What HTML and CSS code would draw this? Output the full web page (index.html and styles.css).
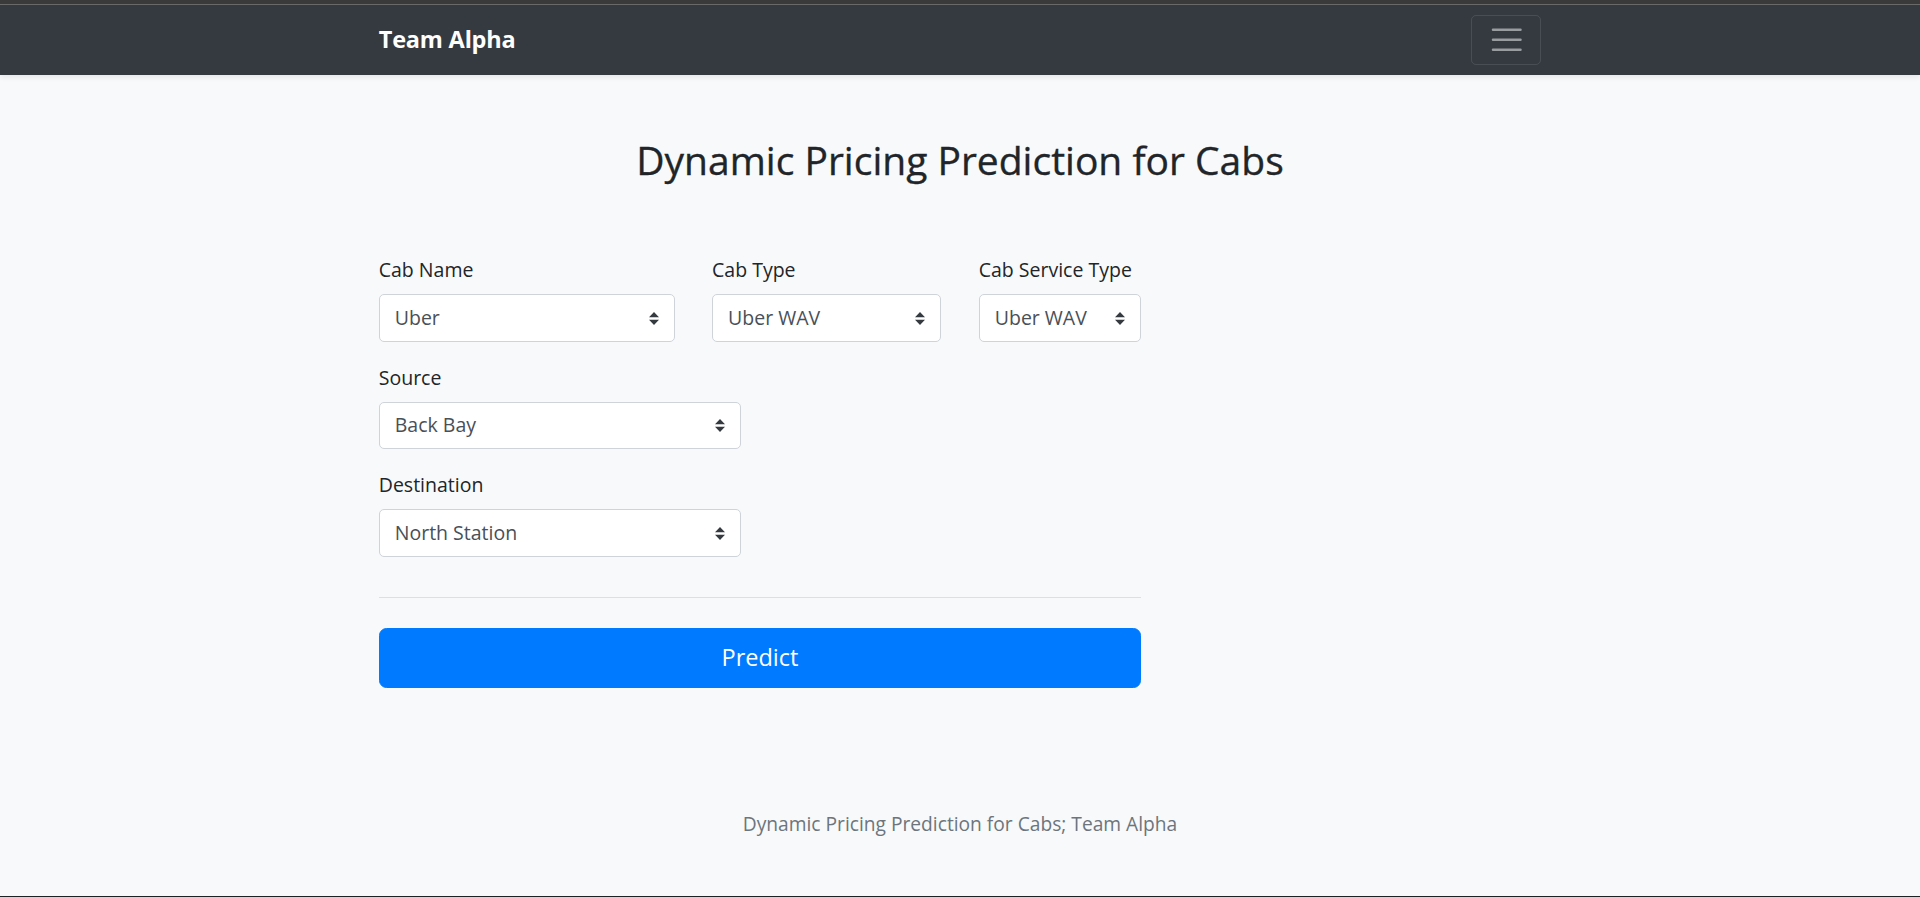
FILE: index.html
```html
<!DOCTYPE html>
<html lang="en">
<head>
<meta charset="utf-8">
<title>Dynamic Pricing Prediction for Cabs</title>
<link rel="stylesheet" href="styles.css">
</head>
<body>
<div class="page">
  <div class="chrome-line"></div>
  <nav class="navbar">
    <div class="nav-inner">
      <a class="brand" href="#">Team Alpha</a>
      <button class="toggler" type="button" aria-label="Toggle navigation">
        <svg class="toggler-icon" viewBox="0 0 30 30" width="37.5" height="37.5">
          <path d="M4 7h22M4 15h22M4 23h22" stroke="rgba(255,255,255,0.5)" stroke-width="2" stroke-linecap="round" stroke-miterlimit="10" fill="none"/>
        </svg>
      </button>
    </div>
  </nav>

  <main class="main">
    <h2 class="title">Dynamic Pricing Prediction for Cabs</h2>

    <form class="form">
      <div class="row row-3">
        <div class="form-group">
          <label class="label">Cab Name</label>
          <select class="select"><option>Uber</option><option>Lyft</option></select>
        </div>
        <div class="form-group">
          <label class="label">Cab Type</label>
          <select class="select"><option>Uber WAV</option></select>
        </div>
        <div class="form-group">
          <label class="label">Cab Service Type</label>
          <select class="select"><option>Uber WAV</option></select>
        </div>
      </div>
      <div class="row row-half">
        <div class="form-group">
          <label class="label">Source</label>
          <select class="select"><option>Back Bay</option></select>
        </div>
      </div>
      <div class="row row-half">
        <div class="form-group">
          <label class="label">Destination</label>
          <select class="select"><option>North Station</option></select>
        </div>
      </div>
      <hr class="divider">
      <button class="btn-predict" type="button">Predict</button>
    </form>
  </main>

  <footer class="footer">Dynamic Pricing Prediction for Cabs; Team Alpha</footer>
</div>
</body>
</html>
```
FILE: styles.css
```css
* { box-sizing: border-box; }

html, body {
  margin: 0;
  padding: 0;
}

body {
  background: #f8f9fa;
  color: #212529;
  font-family: "Open Sans", "Noto Sans", sans-serif;
  font-size: 19.5px;
  line-height: 30px;
}

.page {
  min-height: 897px;
  display: flex;
  flex-direction: column;
  border-bottom: 1px solid #1d2124;
}

.chrome-line {
  height: 5px;
  background: #3a3a3a;
  border-bottom: 1px solid #6a6a6a;
}

.navbar {
  height: 70px;
  background: #343a40;
  box-shadow: 0 2.5px 5px rgba(0, 0, 0, 0.075);
}

.nav-inner {
  width: 1162.5px;
  height: 100%;
  margin: 0 auto;
  display: flex;
  align-items: center;
  justify-content: space-between;
}

.brand {
  color: #fff;
  font-weight: 700;
  font-size: 23.5px;
  line-height: 37.5px;
  text-decoration: none;
  letter-spacing: -0.2px;
}

.toggler {
  width: 70px;
  height: 50px;
  padding: 5px 15px;
  background: transparent;
  border: 1px solid rgba(255, 255, 255, 0.1);
  border-radius: 5px;
  display: flex;
  align-items: center;
  justify-content: center;
}

.toggler-icon {
  display: block;
}

.main {
  width: 1162.5px;
  margin: 0 auto;
}

.title {
  margin: 61px 0 10px;
  font-size: 39px;
  line-height: 48px;
  font-weight: 500;
  text-align: center;
  color: #212529;
  -webkit-text-stroke: 0.35px #212529;
}

.form {
  width: 762.5px;
  padding-top: 60px;
}

.row {
  display: grid;
  column-gap: 37.5px;
}

.row-3 {
  grid-template-columns: 295.8px 229.2px 162.5px;
}

.row-half {
  grid-template-columns: 362.5px;
}

.form-group {
  margin-bottom: 20px;
}

.label {
  display: block;
  margin-bottom: 10px;
  color: #212529;
  padding-top: 1px;
  line-height: 29px;
}

.select {
  display: block;
  width: 100%;
  height: 47.5px;
  padding: 7.5px 35px 7.5px 15px;
  font-family: inherit;
  font-size: 19.5px;
  line-height: 30px;
  color: #495057;
  background-color: #fff;
  background-image: url("data:image/svg+xml,%3csvg xmlns='http://www.w3.org/2000/svg' width='4' height='5' viewBox='0 0 4 5'%3e%3cpath fill='%23343a40' d='M2 0L0 2h4zm0 5L0 3h4z'/%3e%3c/svg%3e");
  background-repeat: no-repeat;
  background-position: right 15px center;
  background-size: 10px 12.5px;
  border: 1px solid #ced4da;
  border-radius: 5px;
  -webkit-appearance: none;
  appearance: none;
  outline: none;
}

.divider {
  margin: 20px 0 30px;
  border: 0;
  border-top: 1px solid rgba(0, 0, 0, 0.1);
  height: 0;
}

.btn-predict {
  display: block;
  width: 100%;
  height: 60px;
  padding: 10px 20px;
  font-family: inherit;
  font-size: 23.5px;
  line-height: 37.5px;
  color: #fff;
  background: #007bff;
  border: 1px solid #007bff;
  border-radius: 7.5px;
}

.footer {
  margin-top: 121px;
  text-align: center;
  color: #6c757d;
  font-size: 19.2px;
  line-height: 30px;
}
```
